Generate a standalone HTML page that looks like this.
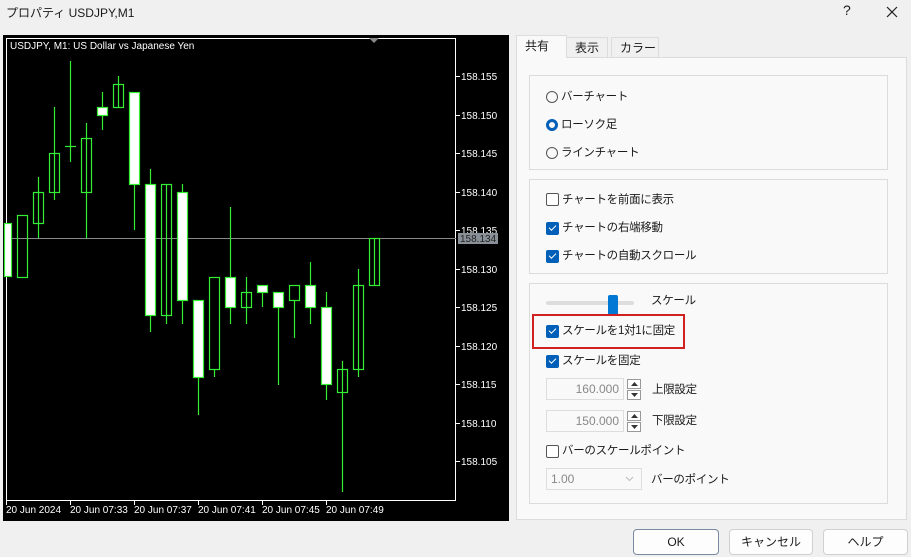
<!DOCTYPE html>
<html><head><meta charset="utf-8"><style>
body{margin:0;width:911px;height:557px;background:#f0f0f0;font-family:"Liberation Sans","Noto Sans CJK JP",sans-serif;font-size:12px;color:#1a1a1a;position:relative;overflow:hidden}
.a{position:absolute;white-space:nowrap}
.title{left:6px;top:4px;font-size:12px}
.panel{left:516px;top:57px;width:391px;height:463px;background:#f9f9f9;border:1px solid #dcdcdc;box-sizing:border-box}
.tab{top:37px;height:20px;line-height:20px;padding:0 8px;border:1px solid #dcdcdc;border-bottom:none;background:#f0f0f0;box-sizing:border-box}
.grp{border:1px solid #dcdcdc;box-sizing:border-box;background:#f9f9f9}
.rad{width:12px;height:12px;border:1px solid #555;border-radius:50%;box-sizing:border-box}
.cb{width:13px;height:13px;border-radius:2px;box-sizing:border-box}
.cb.on{background:#005fb8}
.cb.off{border:1px solid #555;background:#fff}
.cb.on:after{content:"";position:absolute;left:3px;top:3px;width:6px;height:3px;border-left:1.3px solid #fff;border-bottom:1.3px solid #fff;transform:rotate(-45deg)}
.lbl{font-size:11.5px;line-height:14px;letter-spacing:-0.3px}
.inp{border:1px solid #ddd;background:#f9f9f9;color:#888;text-align:right;box-sizing:border-box;height:22px;line-height:20px;padding-right:4px}
.spin{width:14px;height:10px;border:1px solid #999;background:#fff;box-sizing:border-box}
.spin svg{position:absolute;left:3px;top:2px}
.btn{top:529px;height:26px;line-height:24px;text-align:center;background:#fdfdfd;border:1px solid #d0d0d0;border-radius:4px;box-sizing:border-box}
</style></head><body>
<div class="a title">プロパティ USDJPY,M1</div>
<div class="a" style="left:843px;top:2px;font-size:14px">?</div>
<svg class="a" style="left:886px;top:6px" width="12" height="12"><path d="M1 1L11 11M11 1L1 11" stroke="#222" stroke-width="1.2"/></svg>

<svg class="a" style="left:0;top:0" width="512" height="525">
<rect x="3" y="35" width="506" height="486" fill="#000"/>
<rect x="6.5" y="38.5" width="449" height="462" fill="none" stroke="#fff"/>
<polygon points="369,38 379,38 374,43" fill="#888"/>
<text x="10" y="49" fill="#fff" font-size="10" font-family="Liberation Sans,sans-serif">USDJPY, M1:  US Dollar vs Japanese Yen</text>
<line x1="7" y1="238.5" x2="456" y2="238.5" stroke="#888"/>
<g fill="#fff" font-size="10" font-family="Liberation Sans,sans-serif">
<g stroke="#fff"><line x1="456" y1="76.5" x2="460" y2="76.5"/><line x1="456" y1="115.5" x2="460" y2="115.5"/><line x1="456" y1="153.5" x2="460" y2="153.5"/><line x1="456" y1="192.5" x2="460" y2="192.5"/><line x1="456" y1="230.5" x2="460" y2="230.5"/><line x1="456" y1="269.5" x2="460" y2="269.5"/><line x1="456" y1="307.5" x2="460" y2="307.5"/><line x1="456" y1="346.5" x2="460" y2="346.5"/><line x1="456" y1="384.5" x2="460" y2="384.5"/><line x1="456" y1="423.5" x2="460" y2="423.5"/><line x1="456" y1="461.5" x2="460" y2="461.5"/></g>
<text x="461" y="80">158.155</text><text x="461" y="119">158.150</text><text x="461" y="157">158.145</text><text x="461" y="196">158.140</text><text x="461" y="234">158.135</text><text x="461" y="273">158.130</text><text x="461" y="311">158.125</text><text x="461" y="350">158.120</text><text x="461" y="388">158.115</text><text x="461" y="427">158.110</text><text x="461" y="465">158.105</text>
<rect x="458" y="233" width="40" height="11" fill="#8a9098"/><text x="460" y="242" fill="#222">158.134</text>
<g stroke="#fff"><line x1="6.5" y1="500" x2="6.5" y2="505"/><line x1="70.5" y1="500" x2="70.5" y2="505"/><line x1="134.5" y1="500" x2="134.5" y2="505"/><line x1="198.5" y1="500" x2="198.5" y2="505"/><line x1="262.5" y1="500" x2="262.5" y2="505"/><line x1="326.5" y1="500" x2="326.5" y2="505"/></g>
<text x="6" y="513">20 Jun 2024</text><text x="70" y="513">20 Jun 07:33</text><text x="134" y="513">20 Jun 07:37</text><text x="198" y="513">20 Jun 07:41</text><text x="262" y="513">20 Jun 07:45</text><text x="326" y="513">20 Jun 07:49</text>
</g>
<g stroke="#3e3" stroke-width="1.2">
<path d="M38.5 177V238M54.5 107V200M70.5 61V162M86.5 123V238M102.5 92V130M118.5 76V107M134.5 184V230M150.5 169V332M166.5 184V324M182.5 184V324M198.5 377V415M214.5 369V377M230.5 207V324M246.5 277V324M262.5 292V307M278.5 307V385M294.5 300V338M310.5 262V324M326.5 292V400M342.5 361V492M358.5 269V377M374.5 238V285"/>
<line x1="65" y1="146.5" x2="76" y2="146.5"/>
<g fill="#fff">
<rect x="4.5" y="223.5" width="7" height="53"/>
<rect x="97.5" y="107.5" width="10" height="8"/>
<rect x="129.5" y="92.5" width="10" height="92"/>
<rect x="145.5" y="184.5" width="10" height="131"/>
<rect x="177.5" y="192.5" width="10" height="108"/>
<rect x="193.5" y="300.5" width="10" height="77"/>
<rect x="225.5" y="277.5" width="10" height="30"/>
<rect x="257.5" y="285.5" width="10" height="7"/>
<rect x="273.5" y="292.5" width="10" height="15"/>
<rect x="305.5" y="285.5" width="10" height="22"/>
<rect x="321.5" y="307.5" width="10" height="77"/>
</g>
<g fill="none">
<rect x="17.5" y="215.5" width="10" height="62"/>
<rect x="33.5" y="192.5" width="10" height="31"/>
<rect x="49.5" y="153.5" width="10" height="39"/>
<rect x="81.5" y="138.5" width="10" height="54"/>
<rect x="113.5" y="84.5" width="10" height="23"/>
<rect x="161.5" y="184.5" width="10" height="131"/>
<rect x="209.5" y="277.5" width="10" height="92"/>
<rect x="241.5" y="292.5" width="10" height="15"/>
<rect x="289.5" y="285.5" width="10" height="15"/>
<rect x="337.5" y="369.5" width="10" height="23"/>
<rect x="353.5" y="285.5" width="10" height="84"/>
<rect x="369.5" y="238.5" width="10" height="47"/>
</g>
</g>
</svg>

<div class="a panel"></div>
<div class="a tab" style="left:566px">表示</div>
<div class="a tab" style="left:611px;width:48px">カラー</div>
<div class="a tab" style="left:516px;top:35px;height:23px;width:51px;background:#f9f9f9">共有</div>

<div class="a grp" style="left:529px;top:75px;width:359px;height:95px"></div>
<div class="a rad" style="left:546px;top:91px"></div><div class="a lbl" style="left:561px;top:90px">バーチャート</div>
<div class="a rad" style="left:546px;top:119px;border:3px solid #005fb8"></div><div class="a lbl" style="left:561px;top:118px">ローソク足</div>
<div class="a rad" style="left:546px;top:147px"></div><div class="a lbl" style="left:561px;top:146px">ラインチャート</div>

<div class="a grp" style="left:529px;top:179px;width:359px;height:95px"></div>
<div class="a cb off" style="left:546px;top:193px"></div><div class="a lbl" style="left:562px;top:193px">チャートを前面に表示</div>
<div class="a cb on" style="left:546px;top:222px"></div><div class="a lbl" style="left:562px;top:221px">チャートの右端移動</div>
<div class="a cb on" style="left:546px;top:250px"></div><div class="a lbl" style="left:562px;top:249px">チャートの自動スクロール</div>

<div class="a grp" style="left:529px;top:283px;width:359px;height:221px"></div>
<div class="a" style="left:546px;top:301px;width:88px;height:4px;background:#ddd;border-radius:2px"></div>
<div class="a" style="left:608px;top:295px;width:10px;height:20px;background:#0078d4;border-radius:2px"></div>
<div class="a lbl" style="left:651px;top:294px">スケール</div>
<div class="a" style="left:532px;top:314px;width:153px;height:35px;border:2px solid #d02020;box-sizing:border-box"></div>
<div class="a cb on" style="left:546px;top:325px"></div><div class="a lbl" style="left:562px;top:324px">スケールを1対1に固定</div>
<div class="a cb on" style="left:546px;top:355px"></div><div class="a lbl" style="left:562px;top:354px">スケールを固定</div>
<div class="a inp" style="left:546px;top:378px;width:78px">160.000</div>
<div class="a spin" style="left:627px;top:379px"><svg width="7" height="4"><path d="M0 4L3.5 0L7 4Z" fill="#333"/></svg></div><div class="a spin" style="left:627px;top:390px"><svg width="7" height="4"><path d="M0 0L3.5 4L7 0Z" fill="#333"/></svg></div>
<div class="a lbl" style="left:652px;top:383px">上限設定</div>
<div class="a inp" style="left:546px;top:410px;width:78px">150.000</div>
<div class="a spin" style="left:627px;top:411px"><svg width="7" height="4"><path d="M0 4L3.5 0L7 4Z" fill="#333"/></svg></div><div class="a spin" style="left:627px;top:422px"><svg width="7" height="4"><path d="M0 0L3.5 4L7 0Z" fill="#333"/></svg></div>
<div class="a lbl" style="left:652px;top:414px">下限設定</div>
<div class="a cb off" style="left:546px;top:445px"></div><div class="a lbl" style="left:562px;top:444px">バーのスケールポイント</div>
<div class="a inp" style="left:546px;top:468px;width:96px;text-align:left;padding-left:4px">1.00</div>
<svg class="a" style="left:625px;top:476px" width="9" height="6"><path d="M1 1L4.5 4.5L8 1" stroke="#bbb" fill="none"/></svg>
<div class="a lbl" style="left:651px;top:473px">バーのポイント</div>

<div class="a btn" style="left:633px;width:86px;border-color:#7a8aa0">OK</div>
<div class="a btn" style="left:729px;width:84px">キャンセル</div>
<div class="a btn" style="left:823px;width:85px">ヘルプ</div>
</body></html>
